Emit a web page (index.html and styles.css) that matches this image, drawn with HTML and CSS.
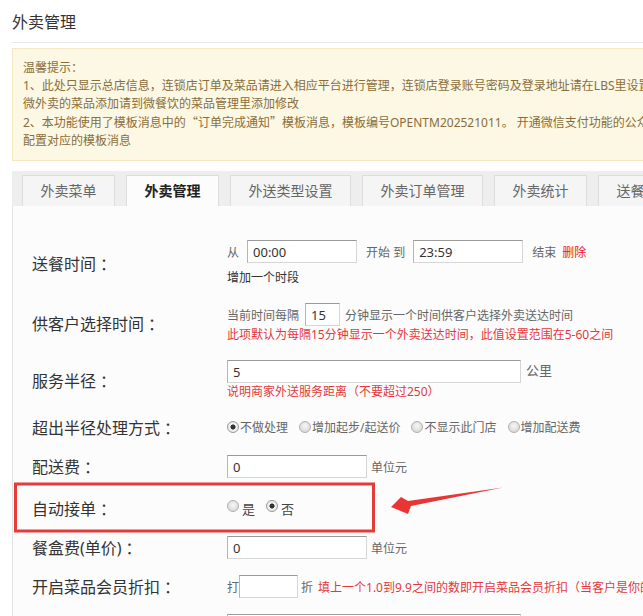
FILE: index.html
```html
<!DOCTYPE html>
<html lang="zh-CN">
<head>
    <meta charset="UTF-8">
    <meta name="viewport" content="width=device-width, initial-scale=1.0">
    <title>外卖管理</title>
    <link rel="stylesheet" href="styles.css">
</head>

<body>
    <div class="page">
        <h1 class="page-title">外卖管理</h1>

        <div class="alert">
            温馨提示：<br>
            1、此处只显示总店信息，连锁店订单及菜品请进入相应平台进行管理，连锁店登录账号密码及登录地址请在LBS里设置，<br>
            微外卖的菜品添加请到微餐饮的菜品管理里添加修改<br>
            2、本功能使用了模板消息中的<span class="cjk">“</span>订单完成通知<span class="cjk">”</span>模板消息，模板编号OPENTM202521011。 开通微信支付功能的公众号请在公众平台<br>
            配置对应的模板消息
        </div>

        <ul class="tabs">
            <li class="tab">外卖菜单</li>
            <li class="tab active">外卖管理</li>
            <li class="tab">外送类型设置</li>
            <li class="tab">外卖订单管理</li>
            <li class="tab">外卖统计</li>
            <li class="tab">送餐员管理</li>
        </ul>

        <section class="panel">
            <div class="form-row">
                <div class="form-label">送餐时间<span class="colon">：</span></div>
                <div class="form-field">
                    <div class="field-line">
                        从<input class="input time-input" type="text" value="00:00">开始 到<input class="input time-input" type="text" value="23:59">结束<a class="link-del">删除</a>
                    </div>
                    <div class="add-period">增加一个时段</div>
                </div>
            </div>

            <div class="form-row">
                <div class="form-label">供客户选择时间<span class="colon">：</span></div>
                <div class="form-field">
                    <div class="field-line">
                        当前时间每隔<input class="input interval-input" type="text" value="15">分钟显示一个时间供客户选择外卖送达时间
                    </div>
                    <div class="hint">此项默认为每隔15分钟显示一个外卖送达时间，此值设置范围在5-60之间</div>
                </div>
            </div>

            <div class="form-row">
                <div class="form-label">服务半径<span class="colon">：</span></div>
                <div class="form-field">
                    <div class="field-line">
                        <input class="input wide-input" type="text" value="5"><span class="unit">公里</span>
                    </div>
                    <div class="hint">说明商家外送服务距离（不要超过250）</div>
                </div>
            </div>

            <div class="form-row">
                <div class="form-label">超出半径处理方式<span class="colon">：</span></div>
                <div class="form-field">
                    <div class="radio-group">
                        <label class="radio"><span class="radio-dot checked"></span>不做处理</label>
                        <label class="radio"><span class="radio-dot"></span>增加起步/起送价</label>
                        <label class="radio"><span class="radio-dot"></span>不显示此门店</label>
                        <label class="radio"><span class="radio-dot"></span>增加配送费</label>
                    </div>
                </div>
            </div>

            <div class="form-row">
                <div class="form-label">配送费<span class="colon">：</span></div>
                <div class="form-field">
                    <div class="field-line">
                        <input class="input fee-input" type="text" value="0"><span class="unit-sm">单位元</span>
                    </div>
                </div>
            </div>

            <div class="form-row row-auto">
                <div class="form-label">自动接单<span class="colon">：</span></div>
                <div class="form-field">
                    <div class="radio-group yes-no">
                        <label class="radio"><span class="radio-dot"></span>是</label>
                        <label class="radio"><span class="radio-dot checked"></span>否</label>
                    </div>
                </div>
            </div>

            <div class="form-row">
                <div class="form-label">餐盒费(单价)<span class="colon">：</span></div>
                <div class="form-field">
                    <div class="field-line">
                        <input class="input fee-input" type="text" value="0"><span class="unit-sm">单位元</span>
                    </div>
                </div>
            </div>

            <div class="form-row">
                <div class="form-label">开启菜品会员折扣<span class="colon">：</span></div>
                <div class="form-field">
                    <div class="field-line">
                        打<input class="input discount-input" type="text" value="">折<span class="hint-inline">填上一个1.0到9.9之间的数即开启菜品会员折扣（当客户是你的会员时才享受此折扣）</span>
                    </div>
                </div>
            </div>

            <div class="form-row">
                <div class="form-label">起送价格<span class="colon">：</span></div>
                <div class="form-field">
                    <div class="field-line">
                        <input class="input wide-input" type="text" value="">
                    </div>
                </div>
            </div>
        </section>

        <!-- annotation drawn over the screenshot -->
        <svg class="annotation" width="643" height="616" viewBox="0 0 643 616">
            <rect x="15.5" y="484" width="358" height="47" fill="none" stroke="#e53b3b" stroke-width="3"/>
            <polygon points="391,507 401,497 408,501 503,487.5 411,506 408,514" fill="#ea3535"/>
        </svg>
    </div>
</body>
</html>
```

FILE: styles.css
```css
html, body {
    margin: 0;
    padding: 0;
    overflow: hidden;
    background: #fff;
}

body {
    font-family: "Noto Sans", "Noto Sans CJK SC", sans-serif;
    color: #333;
}

.page {
    position: relative;
    width: 1100px;
    padding-left: 12px;
}

.page-title {
    margin: 0;
    padding: 11px 0 9px;
    font-size: 16px;
    line-height: 22px;
    font-weight: normal;
    color: #333;
    border-bottom: 1px solid #e8e8e8;
}

.alert {
    margin-top: 5px;
    padding: 10px 10px;
    background: #fcf8e3;
    border: 1px solid #f5e7c4;
    color: #8a6d3b;
    font-size: 12px;
    line-height: 18px;
    white-space: nowrap;
}

.cjk {
    font-family: "Noto Sans CJK SC", sans-serif;
}

/* tabs */
.tabs {
    display: flex;
    gap: 11px;
    list-style: none;
    margin: 10px 0 0;
    padding: 4px 0 0 10px;
    background: #eeeeee;
}

.tab {
    flex-shrink: 0;
    height: 31px;
    line-height: 30px;
    padding: 0 17.5px;
    border: 1px solid #dddddd;
    border-bottom: none;
    box-sizing: border-box;
    background: #f5f5f5;
    font-size: 14px;
    color: #666;
}

.tab.active {
    background: #fcfcfc;
    color: #222;
    font-weight: bold;
}

/* form panel */
.panel {
    background: #fcfcfc;
    border-left: 1px solid #e3e3e3;
    padding: 26px 0 40px 19px;
}

.form-row {
    display: flex;
    align-items: center;
    padding: 8px 0;
}

.row-auto {
    padding-top: 12px;
}

.form-label {
    width: 195px;
    flex-shrink: 0;
    font-size: 16px;
    line-height: 22px;
    color: #333;
}

.colon {
    padding-left: 4px;
}

.form-field {
    font-size: 12px;
    color: #666;
}

.field-line {
    display: flex;
    align-items: center;
    height: 23px;
    white-space: nowrap;
}

.input {
    box-sizing: border-box;
    height: 23px;
    padding: 0 5px;
    border: 1px solid #d6d6d6;
    border-top-color: #9a9a9a;
    border-left-color: #b5b5b5;
    background: #fff;
    font-family: inherit;
    font-size: 13px;
    color: #333;
    outline: none;
}

.time-input {
    width: 110px;
    margin: 0 9px 0 8px;
}

.interval-input {
    width: 35px;
    margin: 0 5px 0 6px;
}

.wide-input {
    width: 294px;
}

.fee-input {
    width: 140px;
}

.discount-input {
    width: 59px;
    margin: 0 3px 0 0;
}

.unit {
    margin-left: 5px;
    font-size: 13px;
    align-self: flex-start;
}

.unit-sm {
    margin-left: 4px;
}

.link-del {
    margin-left: 6px;
    color: #f01818;
}

.add-period {
    margin-top: 6px;
    line-height: 18px;
    color: #333;
}

.hint {
    line-height: 18px;
    color: #e4393c;
}

.hint-inline {
    margin-left: 5px;
    color: #e4393c;
}

/* radios */
.radio-group {
    display: flex;
    align-items: center;
    gap: 11px;
    white-space: nowrap;
}

.radio {
    display: inline-flex;
    align-items: center;
    line-height: 16px;
}

.radio-dot {
    box-sizing: border-box;
    width: 12px;
    height: 12px;
    margin-right: 1px;
    border: 1px solid #b0b0b0;
    border-radius: 50%;
    background: radial-gradient(circle at 50% 40%, #f6f6f6 0, #dcdcdc 70%);
    position: relative;
    top: -1px;
}

.radio-dot.checked {
    border-color: #999;
    background: radial-gradient(circle, #333 0, #333 2.3px, #f4f4f4 2.8px, #dedede 100%);
}

.yes-no .radio {
    font-size: 13px;
    color: #444;
}

.yes-no .radio-dot {
    top: -3px;
    margin-right: 3px;
}

.annotation {
    position: absolute;
    top: 0;
    left: 0;
    pointer-events: none;
}
```
